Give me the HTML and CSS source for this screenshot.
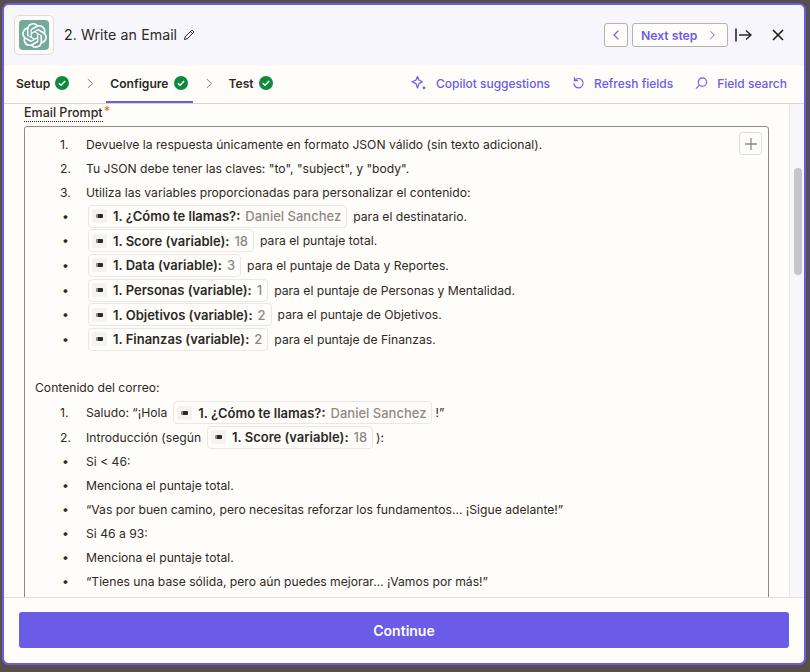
FILE: index.html
```html
<!DOCTYPE html>
<html lang="es">
<head>
<meta charset="utf-8">
<title>Write an Email</title>
<link rel="stylesheet" href="styles.css">
</head>
<body>
<main class="panel">
  <header class="head">
    <div class="logo-box">
      <div class="logo">
        <svg viewBox="0 0 24 24" width="25" height="25" fill="#fff"><path d="M22.2819 9.8211a5.9847 5.9847 0 0 0-.5157-4.9108 6.0462 6.0462 0 0 0-6.5098-2.9A6.0651 6.0651 0 0 0 4.9807 4.1818a5.9847 5.9847 0 0 0-3.9977 2.9 6.0462 6.0462 0 0 0 .7427 7.0966 5.98 5.98 0 0 0 .511 4.9107 6.051 6.051 0 0 0 6.5146 2.9001A5.9847 5.9847 0 0 0 13.2599 24a6.0557 6.0557 0 0 0 5.7718-4.2058 5.9894 5.9894 0 0 0 3.9977-2.9001 6.0557 6.0557 0 0 0-.7475-7.0729zm-9.022 12.6081a4.4755 4.4755 0 0 1-2.8764-1.0408l.1419-.0804 4.7783-2.7582a.7948.7948 0 0 0 .3927-.6813v-6.7369l2.02 1.1686a.071.071 0 0 1 .038.052v5.5826a4.504 4.504 0 0 1-4.4945 4.4944zm-9.6607-4.1254a4.4708 4.4708 0 0 1-.5346-3.0137l.142.0852 4.783 2.7582a.7712.7712 0 0 0 .7806 0l5.8428-3.3685v2.3324a.0804.0804 0 0 1-.0332.0615L9.74 19.9502a4.4992 4.4992 0 0 1-6.1408-1.6464zM2.3408 7.8956a4.485 4.485 0 0 1 2.3655-1.9728V11.6a.7664.7664 0 0 0 .3879.6765l5.8144 3.3543-2.0201 1.1685a.0757.0757 0 0 1-.071 0l-4.8303-2.7865A4.504 4.504 0 0 1 2.3408 7.872zm16.5963 3.8558L13.1038 8.364 15.1192 7.2a.0757.0757 0 0 1 .071 0l4.8303 2.7913a4.4944 4.4944 0 0 1-.6765 8.1042v-5.6772a.79.79 0 0 0-.407-.667zm2.0107-3.0231l-.142-.0852-4.7735-2.7818a.7759.7759 0 0 0-.7854 0L9.409 9.2297V6.8974a.0662.0662 0 0 1 .0284-.0615l4.8303-2.7866a4.4992 4.4992 0 0 1 6.6802 4.66zM8.3065 12.863l-2.02-1.1638a.0804.0804 0 0 1-.038-.0567V6.0742a4.4992 4.4992 0 0 1 7.3757-3.4537l-.142.0805L8.704 5.459a.7948.7948 0 0 0-.3927.6813zm1.0976-2.3654l2.602-1.4998 2.6069 1.4998v2.9994l-2.5974 1.4997-2.6067-1.4997Z"/></svg>
      </div>
    </div>
    <h1 class="title">2. Write an Email</h1>
    <svg class="pencil" viewBox="0 0 12 12" width="12" height="12" fill="none" stroke="#2d2926" stroke-width="1"><path d="M1.5 10.5l.6-2.6L8.3 1.7a1.1 1.1 0 0 1 1.6 0l.4.4a1.1 1.1 0 0 1 0 1.6L4.1 9.900z"/><path d="M7.400 2.600l2 2"/></svg>
    <div class="head-actions">
      <button class="nav-btn prev" type="button"><svg viewBox="0 0 10 14" width="8" height="12" fill="none" stroke="#6a5ce6" stroke-width="1.5"><path d="M8 1.500L2.500 7 8 12.500"/></svg></button>
      <button class="nav-btn next" type="button"><span>Next step</span><svg viewBox="0 0 10 14" width="7" height="10" fill="none" stroke="#6a5ce6" stroke-width="1.4"><path d="M2 1.500L7.500 7 2 12.500"/></svg></button>
      <svg class="collapse" viewBox="0 0 17 14" width="17" height="14" fill="none" stroke="#2d2926" stroke-width="1.4"><path d="M1 .5v13" stroke-width="1.6"/><path d="M4 7h12M11 2.500L16 7l-5 4.500"/></svg>
      <svg class="close" viewBox="0 0 12 12" width="12" height="12" fill="none" stroke="#1f1b18" stroke-width="1.6"><path d="M1 1l10 10M11 1L1 11"/></svg>
    </div>
  </header>

  <nav class="tabs">
    <a class="tab">Setup <svg class="check" viewBox="0 0 14 14" width="14" height="14"><circle cx="7" cy="7" r="7" fill="#0f8a3c"/><path d="M3.800 7.200l2.200 2 4.200-4.200" fill="none" stroke="#fff" stroke-width="1.500"/></svg></a>
    <svg class="chev" viewBox="0 0 8 12" width="7" height="11" fill="none" stroke="#7d7874" stroke-width="1.100"><path d="M1 1l5.500 5L1 11"/></svg>
    <a class="tab active">Configure <svg class="check" viewBox="0 0 14 14" width="14" height="14"><circle cx="7" cy="7" r="7" fill="#0f8a3c"/><path d="M3.800 7.200l2.200 2 4.200-4.200" fill="none" stroke="#fff" stroke-width="1.500"/></svg></a>
    <svg class="chev" viewBox="0 0 8 12" width="7" height="11" fill="none" stroke="#7d7874" stroke-width="1.100"><path d="M1 1l5.500 5L1 11"/></svg>
    <a class="tab">Test <svg class="check" viewBox="0 0 14 14" width="14" height="14"><circle cx="7" cy="7" r="7" fill="#0f8a3c"/><path d="M3.800 7.200l2.200 2 4.200-4.200" fill="none" stroke="#fff" stroke-width="1.500"/></svg></a>
    <div class="tools">
      <a class="tool"><svg viewBox="0 0 16 16" width="16" height="16" fill="none" stroke="#6a5ce6" stroke-width="1.200"><path d="M6.500 1.500L8 5l3.500 1.800L8 8.600 6.500 13 5 8.600 1 6.800 5 5z" stroke-linejoin="round"/><circle cx="13" cy="12.800" r="1.400" fill="#6a5ce6" stroke="none"/></svg>Copilot suggestions</a>
      <a class="tool"><svg viewBox="0 0 14 14" width="13" height="14" fill="none" stroke="#6a5ce6" stroke-width="1.200"><path d="M3 4.200a5 5 0 1 1-1 3"/><path d="M2.600 .8v3.700h3.700"/></svg>Refresh fields</a>
      <a class="tool"><svg viewBox="0 0 14 14" width="13" height="14" fill="none" stroke="#6a5ce6" stroke-width="1.200"><circle cx="8" cy="6" r="4.500"/><path d="M4.500 9.500L1 13"/></svg>Field search</a>
    </div>
  </nav>

  <div class="body">
    <section class="content">
      <label class="field-label"><span class="label-text">Email Prompt</span><span class="req">*</span></label>
      <div class="editor">
        <button class="plus" type="button"><svg viewBox="0 0 12 12" width="12" height="12" fill="none" stroke="#8f8a85" stroke-width="1.300"><path d="M6 0v12M0 6h12"/></svg></button>
        <ol class="list">
          <li><span class="mk">1.</span><span>Devuelve la respuesta únicamente en formato JSON válido (sin texto adicional).</span></li>
          <li><span class="mk">2.</span><span>Tu JSON debe tener las claves: "to", "subject", y "body".</span></li>
          <li><span class="mk">3.</span><span>Utiliza las variables proporcionadas para personalizar el contenido:</span></li>
          <li class="tk"><span class="mk dot">•</span><span class="token"><i class="ti"><b></b></i><strong>1. ¿Cómo te llamas?:</strong><em>Daniel Sanchez</em></span><span>para el destinatario.</span></li>
          <li class="tk"><span class="mk dot">•</span><span class="token"><i class="ti"><b></b></i><strong>1. Score (variable):</strong><em>18</em></span><span>para el puntaje total.</span></li>
          <li class="tk"><span class="mk dot">•</span><span class="token"><i class="ti"><b></b></i><strong>1. Data (variable):</strong><em>3</em></span><span>para el puntaje de Data y Reportes.</span></li>
          <li class="tk"><span class="mk dot">•</span><span class="token"><i class="ti"><b></b></i><strong>1. Personas (variable):</strong><em>1</em></span><span>para el puntaje de Personas y Mentalidad.</span></li>
          <li class="tk"><span class="mk dot">•</span><span class="token"><i class="ti"><b></b></i><strong>1. Objetivos (variable):</strong><em>2</em></span><span>para el puntaje de Objetivos.</span></li>
          <li class="tk"><span class="mk dot">•</span><span class="token"><i class="ti"><b></b></i><strong>1. Finanzas (variable):</strong><em>2</em></span><span>para el puntaje de Finanzas.</span></li>
        </ol>
        <p class="para">Contenido del correo:</p>
        <ol class="list">
          <li class="tk"><span class="mk">1.</span><span>Saludo: “¡Hola</span><span class="token inline"><i class="ti"><b></b></i><strong>1. ¿Cómo te llamas?:</strong><em>Daniel Sanchez</em></span><span class="tight">!”</span></li>
          <li class="tk"><span class="mk">2.</span><span>Introducción (según</span><span class="token inline"><i class="ti"><b></b></i><strong>1. Score (variable):</strong><em>18</em></span><span class="tight">):</span></li>
          <li><span class="mk dot">•</span><span>Si &lt; 46:</span></li>
          <li><span class="mk dot">•</span><span>Menciona el puntaje total.</span></li>
          <li><span class="mk dot">•</span><span>“Vas por buen camino, pero necesitas reforzar los fundamentos... ¡Sigue adelante!”</span></li>
          <li><span class="mk dot">•</span><span>Si 46 a 93:</span></li>
          <li><span class="mk dot">•</span><span>Menciona el puntaje total.</span></li>
          <li><span class="mk dot">•</span><span>“Tienes una base sólida, pero aún puedes mejorar... ¡Vamos por más!”</span></li>
        </ol>
      </div>
    </section>
    <div class="scroll"><div class="thumb"></div></div>
  </div>

  <footer class="foot">
    <button class="continue" type="button">Continue</button>
  </footer>
</main>
</body>
</html>
```

FILE: styles.css
```css
* { box-sizing: border-box; }
html, body { height: 100%; }
body {
  margin: 0;
  padding: 3px 4px 7px 2px;
  background: #574f4c;
  font-family: Inter, "Liberation Sans", sans-serif;
  color: #2d2926;
  overflow: hidden;
}
.panel {
  height: 662px;
  display: flex;
  flex-direction: column;
  background: #fffdf9;
  border: 2px solid #6a5ce6;
  border-radius: 7px;
  overflow: hidden;
}
.head {
  height: 60px;
  flex: none;
  display: flex;
  align-items: center;
  padding: 0 20px 0 10px;
  background: #f7f6fd;
}
.logo-box {
  width: 40px;
  height: 40px;
  display: flex;
  align-items: center;
  justify-content: center;
  background: #fffdf9;
  border: 1px solid #e2dcd2;
  border-radius: 5px;
}
.logo {
  width: 30px;
  height: 30px;
  display: flex;
  align-items: center;
  justify-content: center;
  background: #74aa9c;
  border-radius: 4px;
}
.title {
  margin: 0 0 1px 10px;
  font-size: 14.2px;
  font-weight: 400;
  word-spacing: 0.3px;
  color: #2d2926;
}
.pencil { margin-left: 6px; }
.head-actions {
  margin-left: auto;
  display: flex;
  align-items: center;
}
.nav-btn {
  height: 24px;
  display: flex;
  align-items: center;
  background: #fffdf9;
  border: 1px solid #b5b2af;
  border-radius: 3px;
  padding: 0;
  font: 600 12.2px Inter, sans-serif;
  color: #6a5ce6;
}
.prev { width: 24px; justify-content: center; }
.next { width: 96px; margin-left: 4px; padding: 0 11px 0 8px; justify-content: space-between; }
.collapse { margin-left: 7px; }
.close { margin-left: 20px; }
.tabs {
  height: 39px;
  flex: none;
  display: flex;
  align-items: center;
  padding: 0 17px 0 12px;
  border-bottom: 1px solid #d8d5d0;
  background: #fffdf9;
}
.tab {
  height: 38px;
  padding-bottom: 1.5px;
  display: flex;
  align-items: center;
  gap: 5px;
  font-size: 12.1px;
  font-weight: 600;
  color: #2d2926;
}
.tab.active {
  padding: 0 5px 1.5px 4px;
  margin: 0 -5px 0 -4px;
  box-shadow: inset 0 -2px 0 #6a5ce6;
}
.chev { margin: 0 16px 1.5px 18px; }
.tools {
  margin-left: auto;
  margin-bottom: 1.5px;
  display: flex;
  align-items: center;
  gap: 22px;
}
.tool {
  display: flex;
  align-items: center;
  gap: 9px;
  font-size: 12px;
  font-weight: 500;
  color: #6a5ce6;
}
.body {
  flex: 1;
  min-height: 0;
  display: flex;
  overflow: hidden;
}
.content {
  flex: 1;
  min-width: 0;
  padding: 1px 20px 0 20px;
}
.field-label {
  display: flex;
  height: 21px;
  align-items: flex-start;
  font-size: 12.5px;
  font-weight: 500;
}
.label-text {
  line-height: 16px;
  border-bottom: 1px dotted #2d2926;
}
.req { color: #f26b1d; font-size: 12.5px; margin-left: 1px; line-height: 14px; }
.editor {
  position: relative;
  height: 600px;
  border: 1px solid #8f8a85;
  border-radius: 3px 3px 0 0;
  padding: 5px 10px 0 10px;
  font-size: 12.15px;
}
.plus {
  position: absolute;
  top: 5px;
  right: 6px;
  width: 23px;
  height: 23px;
  display: flex;
  align-items: center;
  justify-content: center;
  padding: 0;
  background: transparent;
  border: 1px solid #e0ddd8;
  border-radius: 3px;
}
.list {
  list-style: none;
  margin: 0;
  padding: 0;
}
.list li {
  height: 24px;
  display: flex;
  align-items: center;
  color: #2d2926;
}
.list li.tk { height: 24.6px; }
.mk {
  width: 51px;
  padding-left: 25px;
  flex: none;
}
.mk.dot { padding-left: 27px; }
.token {
  display: inline-flex;
  align-items: center;
  height: 23px;
  margin: 0 6px 0 2px;
  padding: 0 5px 0 3px;
  background: #fffdf9;
  border: 1px solid #ebe8e3;
  border-radius: 4px;
  white-space: nowrap;
  font-size: 13px;
}
.token.inline { margin-left: 6px; }
.token strong { font-weight: 600; margin-left: 6px; }
.token em { font-style: normal; font-weight: 500; color: #8f8a85; margin-left: 5px; }
.ti {
  width: 15px;
  height: 14px;
  display: flex;
  align-items: center;
  justify-content: center;
  background: #f5f3ef;
  border-radius: 2px;
}
.ti b {
  display: block;
  width: 7px;
  height: 4px;
  background: linear-gradient(90deg, #8f8a85 0 2px, #2d2926 2px);
  border-radius: 1px;
}
.tight { margin-left: -3px; }
.para {
  margin: 23px 0 0;
  height: 26px;
  line-height: 25px;
}
.scroll {
  width: 15px;
  flex: none;
  padding: 64px 3px 0 4px;
  background: #f7f6f9;
  border-left: 1px solid #e8e6e3;
}
.thumb {
  width: 8px;
  height: 107px;
  background: #c6c6c6;
  border-radius: 4px;
}
.foot {
  height: 66px;
  flex: none;
  padding: 14px 15px 0 15px;
  background: #fffdf9;
  border-top: 1px solid #e3e1dd;
}
.continue {
  display: block;
  width: 100%;
  height: 36px;
  background: #6a5ce6;
  color: #fffdf9;
  border: 0;
  border-radius: 3px;
  font: 600 14px Inter, sans-serif;
}
```
